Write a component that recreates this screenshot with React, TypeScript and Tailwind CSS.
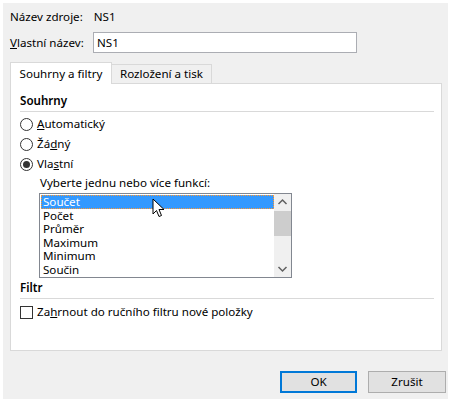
import React from 'react';

const font = { fontFamily: '"Noto Sans", "Liberation Sans", sans-serif' };

const Radio = ({ checked, children }: { checked?: boolean; children: React.ReactNode }) => (
  <div className="h-[20px] flex items-center">
    <span className="w-[13px] h-[13px] rounded-full border border-[#333333] bg-white flex items-center justify-center">
      {checked && <span className="w-[7px] h-[7px] rounded-full bg-[#333333]" />}
    </span>
    <span className="ml-[4px] leading-[16px]">{children}</span>
  </div>
);

const items = ['Součet', 'Počet', 'Průměr', 'Maximum', 'Minimum', 'Součin'];

export default function App() {
  return (
    <div className="w-[450px] h-[399px] bg-white pt-[3px] pl-[3px] pr-[2px] text-[11.6px] text-black" style={font}>
      <div className="h-full bg-[#f0f0f0] pl-[7px] pt-[6px] relative">
        <div className="h-[16px] leading-[16px] flex">
          <span>Název zdroje:</span>
          <span className="ml-[11px]">NS1</span>
        </div>
        <div className="mt-[7px] h-[21px] flex items-center">
          <span className="w-[83px] leading-[16px]"><u>V</u>lastní název:</span>
          <div className="w-[264px] h-[21px] border border-[#abadb3] bg-white pl-[3px] leading-[19px]">NS1</div>
        </div>

        <div className="mt-[9px] h-[21px] flex items-end">
          <div className="relative z-10 h-[22px] w-[102px] bg-white border border-b-0 border-[#d9d9d9] -mb-px flex items-center justify-center leading-[16px]">
            Souhrny a filtry
          </div>
          <div className="h-[19px] w-[100px] bg-[#f0f0f0] border border-b-0 border-l-0 border-[#d9d9d9] flex items-center justify-center leading-[16px]">
            Rozložení a tisk
          </div>
        </div>

        <div className="w-[432px] h-[268px] bg-white border border-[#d9d9d9] pl-[9px] pt-[9px]">
          <div className="h-[16px] leading-[16px] font-semibold">Souhrny</div>
          <div className="mt-[2px] h-px w-[414px] bg-[#d9d9d9]" />
          <div className="mt-[2px]">
            <Radio><u>A</u>utomatický</Radio>
            <Radio>Žá<u>d</u>ný</Radio>
            <Radio checked>Vla<u>s</u>tní</Radio>
          </div>
          <div className="ml-[20px] mt-px h-[16px] leading-[16px]">Vyberte jednu nebo více funkcí:</div>
          <div className="ml-[19px] mt-[2px] w-[253px] h-[85px] border border-[#828790] bg-white flex relative">
            <div className="flex-1 pl-px pt-px">
              {items.map((it, i) => (
                <div
                  key={it}
                  className={
                    i === 0
                      ? 'h-[13.6px] leading-[13.6px] pl-[2px] bg-[#3399ff] text-white outline-1 outline-dotted outline-[#ff9933] -outline-offset-1'
                      : 'h-[13.6px] leading-[13.6px] pl-[2px]'
                  }
                >
                  {it}
                </div>
              ))}
            </div>
            <div className="w-[17px] bg-[#f0f0f0] flex flex-col items-center">
              <svg width="17" height="17" viewBox="0 0 17 17">
                <path d="M4.5 10 L8.5 6 L12.5 10" fill="none" stroke="#606060" strokeWidth="1.5" />
              </svg>
              <div className="w-[17px] h-[25px] bg-[#cdcdcd]" />
              <div className="flex-1" />
              <svg width="17" height="17" viewBox="0 0 17 17">
                <path d="M4.5 7 L8.5 11 L12.5 7" fill="none" stroke="#606060" strokeWidth="1.5" />
              </svg>
            </div>
            <svg className="absolute left-[112px] top-[4px]" width="14" height="21" viewBox="0 0 14 21">
              <path d="M1 1 L1 16 L4.5 12.5 L7 18.5 L9.5 17.5 L7 11.5 L12 11.5 Z" fill="white" stroke="black" strokeWidth="1" strokeLinejoin="round" />
            </svg>
          </div>
          <div className="mt-[2px] h-[16px] leading-[16px] font-semibold">Filtr</div>
          <div className="mt-[2px] h-px w-[414px] bg-[#d9d9d9]" />
          <div className="mt-[3px] h-[20px] flex items-center">
            <span className="w-[13px] h-[13px] border border-[#333333] bg-white" />
            <span className="ml-[4px] leading-[16px]">Za<u>h</u>rnout do ručního filtru nové položky</span>
          </div>
        </div>

        <div className="mt-[20px] flex justify-end gap-[11px] pr-[2px]">
          <button className="w-[77px] h-[22px] bg-[#e1e1e1] border-2 border-[#0078d7] flex items-center justify-center">OK</button>
          <button className="w-[78px] h-[22px] bg-[#e1e1e1] border border-[#adadad] flex items-center justify-center">Zrušit</button>
        </div>
      </div>
    </div>
  );
}
